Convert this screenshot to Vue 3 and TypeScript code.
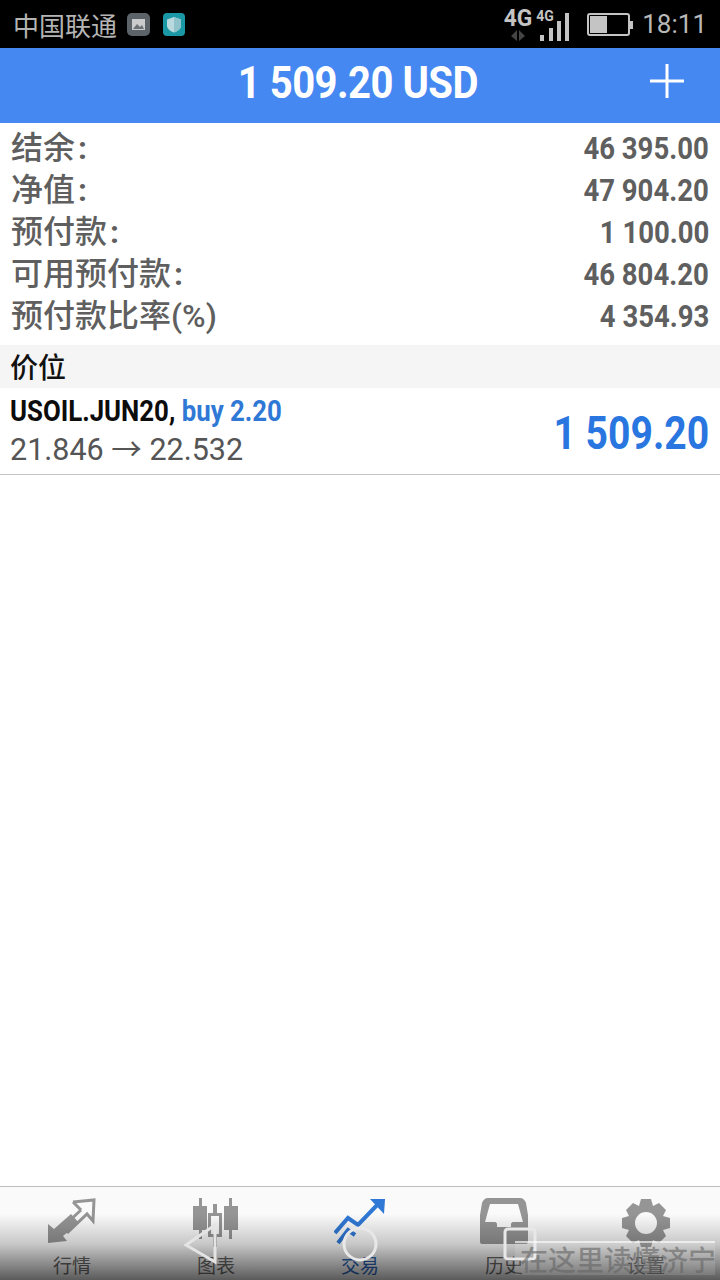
<script setup lang="ts">
const summary = [
  { label: '结余', suffix: ':', value: '46 395.00' },
  { label: '净值', suffix: ':', value: '47 904.20' },
  { label: '预付款', suffix: ':', value: '1 100.00' },
  { label: '可用预付款', suffix: ':', value: '46 804.20' },
  { label: '预付款比率(%)', suffix: '', value: '4 354.93' },
]

const tabs = [
  { id: 'quotes', label: '行情' },
  { id: 'chart', label: '图表' },
  { id: 'trade', label: '交易' },
  { id: 'history', label: '历史' },
  { id: 'settings', label: '设置' },
]
</script>

<template>
  <div class="phone">
    <div class="statusbar">
      <div class="status-left">
        <span class="carrier">中国联通</span>
        <svg class="note" width="23" height="23" viewBox="0 0 23 23">
          <rect width="23" height="23" rx="5" fill="#5d6469" />
          <rect x="5" y="6" width="13" height="11" fill="#c9cbcc" />
          <path d="M6 16l4-5 3 3 2-2 2 4z" fill="#6a7074" />
        </svg>
        <svg class="note" width="22" height="23" viewBox="0 0 22 23">
          <rect width="22" height="23" rx="4" fill="#1b98a6" />
          <path d="M11 4l7 2.500v6c0 3.500-3 5.500-7 7-4-1.500-7-3.500-7-7v-6z" fill="#b9d9de" />
          <path d="M11 4l7 2.500v6c0 3.500-3 5.500-7 7z" fill="#8fc3cb" />
        </svg>
      </div>
      <div class="status-right">
        <div class="net">
          <span class="net-label">4G</span>
          <svg width="16" height="11" viewBox="0 0 16 11"><path d="M7 0v11L1 6zM9 0v11l6-5z" fill="#444" /></svg>
        </div>
        <div class="signal">
          <span class="signal-label">4G</span>
          <svg width="30" height="36" viewBox="0 0 30 36">
            <rect x="1" y="29" width="4" height="6" fill="#c4c4c4" />
            <rect x="10" y="22" width="4" height="13" fill="#c4c4c4" />
            <rect x="18" y="15" width="4" height="20" fill="#c4c4c4" />
            <rect x="26" y="7" width="4" height="28" fill="#c4c4c4" />
          </svg>
        </div>
        <svg class="battery" width="46" height="23" viewBox="0 0 46 23">
          <rect x="1" y="1" width="41" height="21" rx="2" fill="none" stroke="#c4c4c4" stroke-width="2" />
          <rect x="3" y="3" width="17" height="17" fill="#c4c4c4" />
          <rect x="43" y="8" width="3" height="8" fill="#c4c4c4" />
        </svg>
        <span class="clock">18:11</span>
      </div>
    </div>

    <header class="topbar">
      <span class="title">1 509.20 USD</span>
      <svg class="plus" width="36" height="36" viewBox="0 0 36 36">
        <path d="M18 1v34M1 18h34" stroke="#fff" stroke-width="3" />
      </svg>
    </header>

    <section class="summary">
      <div v-for="row in summary" :key="row.label" class="summary-row">
        <span class="summary-label">{{ row.label }}<span class="colon">{{ row.suffix }}</span></span>
        <span class="summary-value">{{ row.value }}</span>
      </div>
    </section>

    <div class="section-head">价位</div>

    <div class="position">
      <div class="position-info">
        <div class="position-name">USOIL.JUN20, <span class="side">buy 2.20</span></div>
        <div class="position-price">21.846 → 22.532</div>
      </div>
      <div class="profit">1 509.20</div>
    </div>

    <div class="spacer"></div>

    <nav class="tabbar">
      <div v-for="tab in tabs" :key="tab.id" class="tab" :class="{ active: tab.id === 'trade' }">
        <svg v-if="tab.id === 'quotes'" width="52" height="52" viewBox="0 0 52 52">
          <path d="M2 26l6 5 17-15 8 9-16 13 4 5-19 2z" fill="#959595" />
          <path d="M27 4l21-2-1 21-6-7-20 19M35 12l-8-8M35 12l-15 14" fill="none" stroke="#959595" stroke-width="3" />
        </svg>
        <svg v-else-if="tab.id === 'chart'" width="50" height="52" viewBox="0 0 50 52">
          <path d="M8 0h3v8h5v24h-5v9H8v-9H2V8h6zM38 0h3v8h6v24h-6v9h-3v-9h-5V8h5z" fill="#959595" />
          <path d="M22 6h4v9h5v24h-5v10h-4V39h-5V15h5zM20 18v18h8V18z" fill="#959595" fill-rule="evenodd" />
        </svg>
        <svg v-else-if="tab.id === 'trade'" width="52" height="52" viewBox="0 0 52 52">
          <path d="M1 35l13-15 10 7 22-23" fill="none" stroke="#2f78d6" stroke-width="4" />
          <path d="M36 1h15l-1 15z" fill="#2f78d6" />
          <path d="M4 45l10-13 7 5" fill="none" stroke="#2f78d6" stroke-width="4" />
        </svg>
        <svg v-else-if="tab.id === 'history'" width="50" height="52" viewBox="0 0 50 52">
          <path d="M9 0h32c3 0 5 2 6 5l2 12v27c0 1-1 2-2 2H3c-1 0-2-1-2-2V17L3 5c1-3 3-5 6-5zM11 6L6 24h10c1 0 2 1 2 2v3h14v-3c0-1 1-2 2-2h10L39 6z" fill="#959595" fill-rule="evenodd" />
        </svg>
        <svg v-else width="50" height="52" viewBox="0 0 50 52">
          <path d="M20 1h10l2 7 6-3 7 7-3 6 7 2v10l-7 2 3 6-7 7-6-3-2 7H20l-2-7-6 3-7-7 3-6-7-2V20l7-2-3-6 7-7 6 3zM25 14a11 11 0 100 22 11 11 0 000-22z" fill="#959595" fill-rule="evenodd" />
        </svg>
        <span class="tab-label">{{ tab.label }}</span>
      </div>

      <div class="shade"></div>
      <svg class="softkeys" width="360" height="46" viewBox="0 0 360 46">
        <path d="M31 5L2 25l29 17z" fill="none" stroke="#e4e4e4" stroke-width="3" />
        <circle cx="176" cy="24" r="16" fill="none" stroke="#e8e8e8" stroke-width="3" />
        <rect x="321" y="9" width="30" height="30" rx="3" fill="none" stroke="#e8e8e8" stroke-width="3" />
      </svg>
      <div class="watermark">在这里读懂济宁</div>
    </nav>
  </div>
</template>

<style scoped>
.phone {
  width: 720px;
  height: 1280px;
  display: flex;
  flex-direction: column;
  background: #fff;
  overflow: hidden;
  font-family: Roboto, "Noto Sans CJK SC", sans-serif;
}

.statusbar {
  height: 48px;
  flex: none;
  background: #000;
  display: flex;
  justify-content: space-between;
  align-items: center;
  padding: 0 13px;
  color: #b4b4b4;
}

.status-left {
  display: flex;
  align-items: center;
}

.carrier {
  font-size: 26px;
  font-family: "Noto Sans CJK SC", sans-serif;
  margin-right: 10px;
}

.note {
  margin-right: 13px;
}

.status-right {
  display: flex;
  align-items: center;
}

.net {
  display: flex;
  flex-direction: column;
  align-items: center;
  margin-right: 6px;
  margin-top: -1px;
}

.net-label {
  font-size: 24px;
  font-weight: 700;
  line-height: 23px;
  color: #c4c4c4;
  transform: scaleX(0.95);
}

.signal {
  position: relative;
  width: 34px;
  height: 36px;
  margin-right: 14px;
}

.signal-label {
  position: absolute;
  left: -3px;
  top: 3px;
  font-size: 14px;
  line-height: 14px;
  font-weight: 700;
  color: #c4c4c4;
}

.signal svg {
  position: absolute;
  left: 0;
  top: 0;
}

.battery {
  margin-right: 9px;
}

.clock {
  font-size: 26px;
  color: #b8b8b8;
}

.topbar {
  position: relative;
  height: 75px;
  flex: none;
  box-sizing: border-box;
  padding-bottom: 6px;
  background: #4688f1;
  display: flex;
  align-items: center;
  justify-content: center;
  color: #fff;
}

.title {
  font-size: 45px;
  font-weight: 700;
  letter-spacing: -0.6px;
  transform: translateX(-2px) scaleX(0.89);
}

.plus {
  position: absolute;
  right: 35px;
  top: 15px;
}

.summary {
  padding: 4px 11px 8px 11px;
}

.summary-row {
  height: 42px;
  display: flex;
  justify-content: space-between;
  align-items: center;
  color: #5f5f5f;
}

.summary-label {
  font-size: 32px;
  font-weight: 500;
  padding-bottom: 6px;
}

.colon {
  margin-left: 3px;
  font-weight: 700;
}

.summary-value {
  font-size: 32px;
  font-weight: 700;
  transform: scaleX(0.86);
  transform-origin: right center;
}

.section-head {
  height: 43px;
  flex: none;
  box-sizing: border-box;
  padding: 0 10px 2px;
  background: #f5f5f5;
  display: flex;
  align-items: center;
  font-size: 28px;
  font-weight: 500;
  color: #111;
}

.position {
  height: 87px;
  flex: none;
  box-sizing: border-box;
  border-bottom: 1px solid #c4c4c4;
  display: flex;
  justify-content: space-between;
  align-items: center;
  padding: 0 11px 0 10px;
}

.position-info {
  margin-top: -3px;
}

.position-name {
  font-size: 30px;
  font-weight: 700;
  line-height: 40px;
  color: #0c0c0c;
  transform: scaleX(0.86);
  transform-origin: left center;
  white-space: nowrap;
}

.side {
  color: #2f78d6;
}

.position-price {
  font-size: 30.500px;
  line-height: 38px;
  color: #555;
}

.profit {
  font-size: 46px;
  font-weight: 700;
  color: #2a76e0;
  transform: scaleX(0.85);
  transform-origin: right center;
  margin-top: 3px;
}

.spacer {
  flex: 1;
}

.tabbar {
  position: relative;
  height: 94px;
  flex: none;
  box-sizing: border-box;
  border-top: 1px solid #bdbdbd;
  background: #fafafa;
  display: grid;
  grid-template-columns: 144px 144px 144px 144px 140px;
}

.tab {
  display: flex;
  flex-direction: column;
  align-items: center;
  height: 93px;
  padding-top: 11px;
  box-sizing: border-box;
  color: #6a6a6a;
}

.tab svg {
  flex: none;
}

.tab-label {
  margin-top: 4px;
  font-size: 19px;
  line-height: 22px;
  font-family: "Noto Sans CJK SC", sans-serif;
}

.tab.active {
  color: #2a66b8;
}

.shade {
  position: absolute;
  left: 0;
  right: 0;
  bottom: 0;
  height: 66px;
  background: linear-gradient(to bottom, rgba(0, 0, 0, 0), rgba(0, 0, 0, 0.2) 45%, rgba(0, 0, 0, 0.64));
}

.softkeys {
  position: absolute;
  left: 184px;
  top: 33px;
}

.watermark {
  position: absolute;
  left: 515px;
  top: 54px;
  width: 200px;
  height: 34px;
  box-sizing: border-box;
  padding-left: 5px;
  border-top: 2px solid rgba(255, 255, 255, 0.6);
  background: rgba(255, 255, 255, 0.12);
  font-size: 28px;
  font-weight: 500;
  line-height: 32px;
  white-space: nowrap;
  color: rgba(100, 100, 100, 0.6);
  font-family: "Noto Sans CJK SC", sans-serif;
}
</style>
